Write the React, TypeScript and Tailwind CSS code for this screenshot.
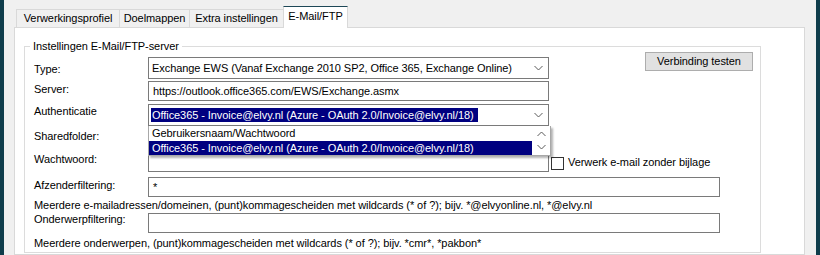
import { FC, ReactNode } from 'react';

const Chevron: FC<{ up?: boolean }> = ({ up }) => (
  <svg width="9" height="6" viewBox="0 0 9 6" className="shrink-0">
    <polyline
      points={up ? '0.5,5 4.5,1 8.5,5' : '0.5,1 4.5,5 8.5,1'}
      fill="none"
      stroke="#5a5a5a"
      strokeWidth="1"
    />
  </svg>
);

// labels sit a little off-centre, like the WinForms original
const Label: FC<{ children: ReactNode; offset: string }> = ({ children, offset }) => (
  <div className={`w-[114px] shrink-0 leading-[13px] whitespace-nowrap ${offset}`}>{children}</div>
);

const TextBox: FC<{ value?: string; width: string }> = ({ value, width }) => (
  <div
    className={`${width} h-[20px] shrink-0 border border-[#7a7a7a] bg-white flex items-center pl-[4px] whitespace-nowrap`}
  >
    {value}
  </div>
);

const Tab: FC<{ label: string; width: string }> = ({ label, width }) => (
  <div
    className={`${width} -ml-px first:ml-0 h-[18px] border border-b-0 border-[#d9d9d9] bg-[#f0f0f0] flex items-center justify-center whitespace-nowrap`}
  >
    {label}
  </div>
);

const App: FC = () => {
  return (
    <div className="flex w-[820px] h-[255px] overflow-hidden bg-[#f0f0f0] text-[11px] tracking-[-0.07px] text-black font-['Liberation_Sans',Arial,sans-serif]">
      <div className="w-[4px] shrink-0 bg-[#0f3d4b]" />

      <div className="flex-1 flex flex-col pl-[10px] pr-[11px] pt-[6px]">
        {/* tabs */}
        <div className="flex items-end h-[21px] pl-[2px] relative z-10">
          <Tab label="Verwerkingsprofiel" width="w-[104px]" />
          <Tab label="Doelmappen" width="w-[71px]" />
          <Tab label="Extra instellingen" width="w-[95px]" />
          <div className="w-[65px] -ml-px h-[22px] -mb-px border border-b-0 border-[#d9d9d9] border-t-[#1d4756] bg-white flex items-center justify-center pb-[3px] whitespace-nowrap">
            E-Mail/FTP
          </div>
        </div>

        {/* panel */}
        <div className="flex-1 border border-[#d9d9d9] bg-white pl-[9px] pr-[43px] pt-[12px]">
          <fieldset className="border border-[#dcdcdc] pb-[1px]">
            <legend className="ml-[5px] px-[3px] leading-[13px]">
              Instellingen E-Mail/FTP-server
            </legend>

            <div className="flex flex-col pl-[9px] pr-[7px] pt-[4px]">
              {/* Type */}
              <div className="flex items-start h-[22px]">
                <Label offset="pt-[6px]">Type:</Label>
                <div className="w-[401px] h-[22px] border border-[#7a7a7a] bg-white flex items-center justify-between pl-[3px] pr-[5px] whitespace-nowrap">
                  <span>Exchange EWS (Vanaf Exchange 2010 SP2, Office 365, Exchange Online)</span>
                  <Chevron />
                </div>
                <button className="ml-auto -mt-[5px] w-[108px] h-[19px] border border-[#adadad] bg-[#e1e1e1] flex items-center justify-center">
                  Verbinding testen
                </button>
              </div>

              {/* Server */}
              <div className="flex items-start h-[20px] mt-[2px]">
                <Label offset="pt-[2px]">Server:</Label>
                <TextBox width="w-[401px]" value="https://outlook.office365.com/EWS/Exchange.asmx" />
              </div>

              {/* Authenticatie */}
              <div className="flex items-start h-[22px] mt-[3px]">
                <Label offset="pt-[1px]">Authenticatie</Label>
                <div className="relative z-10">
                  <div className="w-[401px] h-[22px] border border-[#7a7a7a] bg-white flex items-center justify-between pl-[2px] pr-[5px] whitespace-nowrap">
                    <span className="bg-[#000080] text-white px-[1px] w-[327px] h-[14px] leading-[14px] overflow-hidden">
                      Office365 - Invoice@elvy.nl (Azure - OAuth 2.0/Invoice@elvy.nl/18)
                    </span>
                    <Chevron />
                  </div>

                  {/* open dropdown list */}
                  <div className="absolute left-0 top-[22px] w-[403px] h-[30px] bg-white border border-[#a8a8a8] border-t-0 flex shadow-[2px_2px_2px_rgba(0,0,0,0.3)]">
                    <div className="flex-1 flex flex-col">
                      <div className="h-[15px] leading-[15px] pl-[3px] whitespace-nowrap">
                        Gebruikersnaam/Wachtwoord
                      </div>
                      <div className="h-[14px] leading-[14px] pl-[3px] bg-[#000080] text-white whitespace-nowrap">
                        Office365 - Invoice@elvy.nl (Azure - OAuth 2.0/Invoice@elvy.nl/18)
                      </div>
                    </div>
                    <div className="w-[18px] flex flex-col items-center justify-around py-[1px]">
                      <Chevron up />
                      <Chevron />
                    </div>
                  </div>
                </div>
              </div>

              {/* Sharedfolder */}
              <div className="flex items-start h-[20px] mt-[2px]">
                <Label offset="pt-[2px]">Sharedfolder:</Label>
                <TextBox width="w-[401px]" />
              </div>

              {/* Wachtwoord */}
              <div className="flex items-start h-[20px] mt-[4px]">
                <Label offset="pt-[1px]">Wachtwoord:</Label>
                <TextBox width="w-[401px]" />
                <div className="ml-[2px] mt-[5px] w-[13px] h-[13px] border border-[#333333] bg-white" />
                <span className="ml-[4px] mt-[4px] leading-[13px] whitespace-nowrap">
                  Verwerk e-mail zonder bijlage
                </span>
              </div>

              {/* Afzenderfiltering */}
              <div className="flex items-start h-[20px] mt-[5px]">
                <Label offset="pt-[2px]">Afzenderfiltering:</Label>
                <TextBox width="w-[572px]" value="*" />
              </div>
              <div className="h-[16px] leading-[16px] whitespace-nowrap">
                Meerdere e-mailadressen/domeinen, (punt)kommagescheiden met wildcards (* of ?); bijv. *@elvyonline.nl, *@elvy.nl
              </div>

              {/* Onderwerpfiltering */}
              <div className="flex items-start h-[20px]">
                <Label offset="pt-0">Onderwerpfiltering:</Label>
                <TextBox width="w-[572px]" />
              </div>
              <div className="h-[16px] leading-[16px] mt-[2px] whitespace-nowrap">
                Meerdere onderwerpen, (punt)kommagescheiden met wildcards (* of ?); bijv. *cmr*, *pakbon*
              </div>
            </div>
          </fieldset>
        </div>
      </div>

      <div className="w-[4px] shrink-0 bg-[#0f3d4b]" />
    </div>
  );
};

export default App;
